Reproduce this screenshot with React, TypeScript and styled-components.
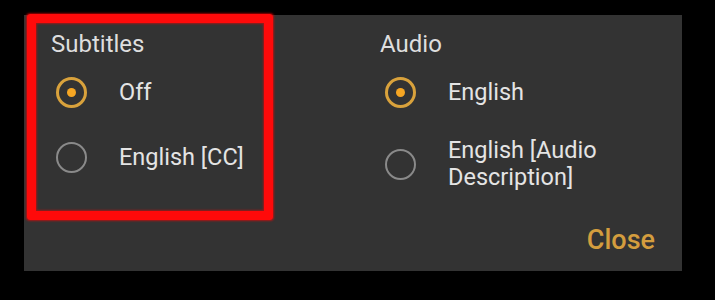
import React from "react";
import styled, { createGlobalStyle } from "styled-components";

const Global = createGlobalStyle`
  html, body { margin: 0; padding: 0; background: #000; }
  body { font-family: Roboto, "Noto Sans", Arial, sans-serif; }
`;

const Stage = styled.div`
  position: relative;
  width: 715px;
  height: 300px;
  background: #000;
  padding-top: 15px;
  padding-left: 24px;
  box-sizing: border-box;
`;

const Panel = styled.div`
  width: 658px;
  height: 256px;
  background: #333333;
  box-sizing: border-box;
  padding: 15px 27px;
  display: flex;
  flex-direction: column;
`;

const Columns = styled.div`
  display: grid;
  grid-template-columns: 329px 1fr;
`;

const Group = styled.div`
  display: flex;
  flex-direction: column;
`;

const Heading = styled.div`
  font-size: 24px;
  line-height: 28px;
  color: #dedede;
  margin-bottom: 6px;
`;

const List = styled.div`
  display: flex;
  flex-direction: column;
  gap: 9px;
`;

const Row = styled.div`
  display: flex;
  align-items: center;
  min-height: 56px;
  padding: 8px 0;
  box-sizing: border-box;
  gap: 28px;
`;

const RadioBox = styled.span`
  width: 40px;
  height: 40px;
  flex: none;
  display: flex;
  align-items: center;
  justify-content: center;
`;

const Ring = styled.span<{ $on: boolean }>`
  width: 31px;
  height: 31px;
  box-sizing: border-box;
  border-radius: 50%;
  border: ${(p) => (p.$on ? "3px solid #d9a23c" : "2.5px solid #8a8a8a")};
  display: flex;
  align-items: center;
  justify-content: center;
`;

const Dot = styled.span`
  width: 9px;
  height: 9px;
  border-radius: 50%;
  background: #f6a623;
`;

const Label = styled.span`
  font-size: 23.5px;
  line-height: 27px;
  color: #e4e4e4;
  max-width: 210px;
`;

const Footer = styled.div`
  margin-top: auto;
  display: flex;
  justify-content: flex-end;
`;

const CloseButton = styled.button`
  background: none;
  border: none;
  padding: 0;
  font-family: Roboto, "Noto Sans", Arial, sans-serif;
  font-size: 27px;
  line-height: 32px;
  font-weight: 500;
  color: #d49d3e;
  cursor: pointer;
`;

const Highlight = styled.div`
  position: absolute;
  left: 27px;
  top: 14px;
  width: 246px;
  height: 206px;
  box-sizing: border-box;
  border: 9px solid #ff0a0a;
  border-radius: 3px;
  box-shadow: 0 0 2px 1px rgba(255, 0, 0, 0.6), inset 0 0 2px 1px rgba(255, 0, 0, 0.5);
  pointer-events: none;
`;

type Option = { label: string; on: boolean };

const Radio = ({ on }: { on: boolean }) => (
  <RadioBox>
    <Ring $on={on}>{on && <Dot />}</Ring>
  </RadioBox>
);

const OptionGroup = ({ title, options }: { title: string; options: Option[] }) => (
  <Group>
    <Heading>{title}</Heading>
    <List>
      {options.map((o) => (
        <Row key={o.label}>
          <Radio on={o.on} />
          <Label>{o.label}</Label>
        </Row>
      ))}
    </List>
  </Group>
);

export default function App() {
  return (
    <>
      <Global />
      <Stage>
        <Panel>
          <Columns>
            <OptionGroup
              title="Subtitles"
              options={[
                { label: "Off", on: true },
                { label: "English [CC]", on: false },
              ]}
            />
            <OptionGroup
              title="Audio"
              options={[
                { label: "English", on: true },
                { label: "English [Audio Description]", on: false },
              ]}
            />
          </Columns>
          <Footer>
            <CloseButton>Close</CloseButton>
          </Footer>
        </Panel>
        <Highlight />
      </Stage>
    </>
  );
}
